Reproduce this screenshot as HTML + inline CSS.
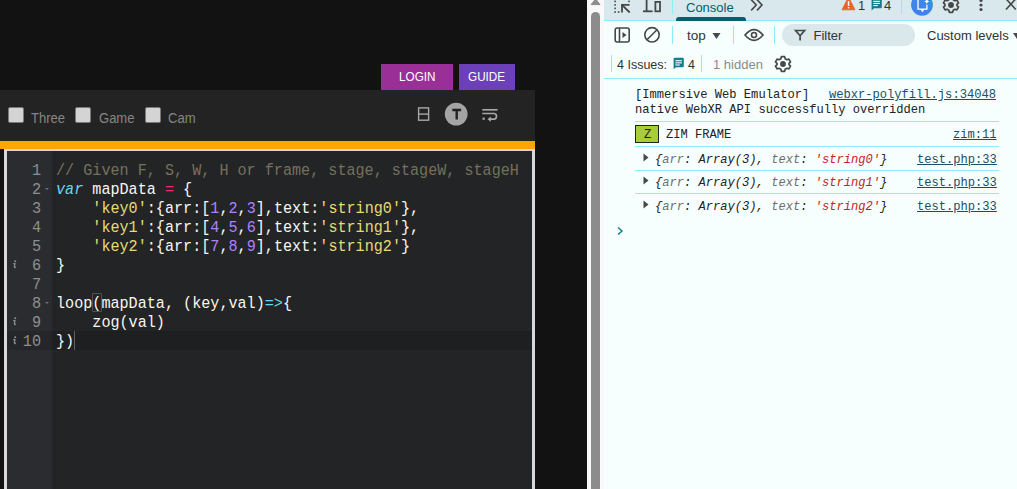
<!DOCTYPE html>
<html><head><meta charset="utf-8">
<style>
*{margin:0;padding:0;box-sizing:border-box}
html,body{width:1017px;height:489px;overflow:hidden;background:#121212;position:relative;font-family:"Liberation Sans",sans-serif}
.abs{position:absolute}
/* left app */
#tb{left:0;top:90px;width:535px;height:51px;background:#232323}
#orange{left:0;top:141px;width:535px;height:8px;background:#ffa600}
.cb{position:absolute;top:107.2px;width:15.5px;height:15.6px;background:#d4d4d4;border:1px solid #7a7a7a;border-radius:2px}
.cbl{position:absolute;top:110px;font-size:14px;color:#868686;line-height:16px;transform:scaleX(0.93);transform-origin:0 0}
.btn{position:absolute;top:64px;height:26px;color:#fff;font-size:13px;line-height:26px;text-align:center}
#editor{left:4px;top:149px;width:531px;height:340px;background:#d8d8d8}
#gutter{left:7px;top:151px;width:45px;height:338px;background:#2b2c2f}
#code{left:52px;top:151px;width:480px;height:338px;background:#232425}
#active{left:52px;top:331px;width:480px;height:19px;background:#1e1f20}
#activeg{left:7px;top:331px;width:45px;height:19px;background:#252629}
.ln{position:absolute;left:6px;margin-top:1px;width:35px;text-align:right;font-family:"Liberation Mono",monospace;font-size:16.3px;line-height:19px;color:#8f908a;transform:scaleX(0.932);transform-origin:100% 0}
.line{position:absolute;left:55.8px;margin-top:1px;white-space:pre;font-family:"Liberation Mono",monospace;font-size:16.3px;line-height:19px;color:#f8f8f2;transform:scaleX(0.929);transform-origin:0 0}
.c{color:#75715e}.k{color:#66d9ef;font-style:italic}.o{color:#f92672}.s{color:#e6db74}.n{color:#ae81ff}.a{color:#66d9ef}
.ii{position:absolute;left:13px;font-size:8px;line-height:10px;color:#9a9a9a;font-style:italic;font-weight:bold;font-family:"Liberation Sans",sans-serif}
.fold{position:absolute;left:45px;width:0;height:0;border-left:2.2px solid transparent;border-right:2.2px solid transparent;border-top:2.5px solid #6f7073}
/* scrollbar */
#sb{left:587px;top:0;width:17px;height:489px;background:#f9f9f9}
#thumb{left:591px;top:12px;width:9px;height:477px;background:#8c8c8c;border-radius:5px 5px 0 0}
/* devtools */
#dt{left:604px;top:0;width:413px;height:489px;background:#f6fefe}
#dtb{left:604px;top:0;width:413px;height:20px;background:#d9e8ec}
.hb{position:absolute;height:1px;background:#8aeefb}
.vs{position:absolute;width:1px;background:#8aeefb}
.ui{position:absolute;font-size:12px;line-height:14px;color:#333}
.mono{position:absolute;margin-top:1px;font-family:"Liberation Mono",monospace;font-size:12.1px;line-height:14px;color:#222;white-space:pre}
.lnk{color:#1a4f66;text-decoration:underline}
.pk{color:#6e6e6e}.st{color:#c5221f}
</style></head><body>
<div class="abs" id="tb"></div>
<div class="abs" id="orange"></div>
<svg class="abs" style="left:410px;top:98px" width="100" height="32">
 <rect x="8.6" y="9.9" width="10" height="12.3" fill="none" stroke="#a8a8a8" stroke-width="1.4"/>
 <path d="M8.6 16.1 H18.6" stroke="#a8a8a8" stroke-width="1.4"/>
 <circle cx="46.2" cy="16.1" r="11.4" fill="#a4a4a4"/>
 <path d="M42.3 12 H51.1 M46.7 12 V21.6" stroke="#222" stroke-width="2.4" fill="none"/>
 <path d="M72.3 11.8 H87.5" stroke="#a8a8a8" stroke-width="1.7"/>
 <path d="M72.3 15.5 H84.5 A3 3 0 0 1 84.5 21.2 H80" stroke="#a8a8a8" stroke-width="1.7" fill="none"/>
 <path d="M77.5 21.2 L80.8 18.6 V23.8 Z" fill="#a8a8a8"/>
 <rect x="72.5" y="19.6" width="2.3" height="2.2" fill="#a8a8a8"/>
</svg>

<div class="cb" style="left:8.3px"></div><div class="cbl" style="left:30.6px">Three</div>
<div class="cb" style="left:75.4px"></div><div class="cbl" style="left:98.7px">Game</div>
<div class="cb" style="left:145.2px"></div><div class="cbl" style="left:167.7px">Cam</div>
<div class="btn" style="left:381px;width:72px;background:#9a2f98"><span style="display:inline-block;transform:scaleX(0.9)">LOGIN</span></div>
<div class="btn" style="left:459px;width:56px;background:#6c40b8"><span style="display:inline-block;transform:scaleX(0.9)">GUIDE</span></div>

<div class="abs" id="editor"></div>
<div class="abs" id="gutter"></div>
<div class="abs" id="code"></div>
<div class="abs" id="activeg"></div>
<div class="abs" id="active"></div>

<div class="ln" style="top:160px">1</div>
<div class="ln" style="top:179px">2</div>
<div class="ln" style="top:198px">3</div>
<div class="ln" style="top:217px">4</div>
<div class="ln" style="top:236px">5</div>
<div class="ln" style="top:255px">6</div>
<div class="ln" style="top:274px">7</div>
<div class="ln" style="top:293px">8</div>
<div class="ln" style="top:312px">9</div>
<div class="ln" style="top:331px">10</div>

<div class="line" style="top:160px"><span class="c">// Given F, S, W, H or frame, stage, stageW, stageH</span></div>
<div class="line" style="top:179px"><span class="k">var</span> mapData <span class="o">=</span> {</div>
<div class="line" style="top:198px">    <span class="s">'key0'</span>:{arr:[<span class="n">1</span>,<span class="n">2</span>,<span class="n">3</span>],text:<span class="s">'string0'</span>},</div>
<div class="line" style="top:217px">    <span class="s">'key1'</span>:{arr:[<span class="n">4</span>,<span class="n">5</span>,<span class="n">6</span>],text:<span class="s">'string1'</span>},</div>
<div class="line" style="top:236px">    <span class="s">'key2'</span>:{arr:[<span class="n">7</span>,<span class="n">8</span>,<span class="n">9</span>],text:<span class="s">'string2'</span>}</div>
<div class="line" style="top:255px">}</div>
<div class="line" style="top:293px">loop(mapData, (key,val)<span class="a">=&gt;</span>{</div>
<div class="line" style="top:312px">    zog(val)</div>
<div class="line" style="top:331px">})</div>

<svg class="abs" style="left:10px;top:255px" width="10" height="19"><circle cx="5.2" cy="6.3" r="1.05" fill="#8c8c8c"/><path d="M3.2 8.7 H4.9 L4.4 11.9 Q4.4 12.5 5.9 12.5" fill="none" stroke="#8c8c8c" stroke-width="1.3"/></svg>
<svg class="abs" style="left:10px;top:312px" width="10" height="19"><circle cx="5.2" cy="6.3" r="1.05" fill="#8c8c8c"/><path d="M3.2 8.7 H4.9 L4.4 11.9 Q4.4 12.5 5.9 12.5" fill="none" stroke="#8c8c8c" stroke-width="1.3"/></svg>
<svg class="abs" style="left:10px;top:331px" width="10" height="19"><circle cx="5.2" cy="6.3" r="1.05" fill="#8c8c8c"/><path d="M3.2 8.7 H4.9 L4.4 11.9 Q4.4 12.5 5.9 12.5" fill="none" stroke="#8c8c8c" stroke-width="1.3"/></svg>
<div class="fold" style="top:187.5px"></div>
<div class="fold" style="top:301.5px"></div>
<div class="abs" style="left:91.5px;top:292.8px;width:10px;height:19.5px;border:1px solid #545247;border-radius:1px"></div>
<div class="abs" style="left:74px;top:331px;width:1px;height:19px;background:#5f6062"></div>
<div class="abs" id="sb"></div>
<div class="abs" id="thumb"></div>

<div class="abs" id="dt"></div>
<div class="abs" id="dtb"></div>
<div class="hb" style="left:604px;top:20px;width:413px"></div>
<div class="hb" style="left:604px;top:78px;width:413px"></div>
<!-- scrollbar arrow -->
<svg class="abs" style="left:590px;top:0" width="12" height="6"><path d="M1.2 4.6 L5.6 -1.2 L10 4.6 Z" fill="#8c8c8c" stroke="#8c8c8c" stroke-width="1" stroke-linejoin="round"/></svg>
<!-- top toolbar icons -->
<svg class="abs" style="left:612px;top:-4px" width="22" height="20" fill="none" stroke="#474747">
 <g fill="#474747" stroke="none"><rect x="2.3" y="4.6" width="1.6" height="1.6"/><rect x="2.3" y="8.1" width="1.6" height="1.6"/><rect x="2.3" y="11.6" width="1.6" height="1.6"/><rect x="2.3" y="15.2" width="1.6" height="1.6"/><rect x="5.8" y="15.2" width="1.6" height="1.6"/><rect x="16.2" y="4.6" width="1.6" height="1.6"/></g>
 <path d="M10 16.5 V8.8 H17.5" stroke-width="1.8"/><path d="M10.5 9.3 L17.7 16.5" stroke-width="1.8"/>
</svg>
<svg class="abs" style="left:640px;top:-4px" width="24" height="20" fill="none" stroke="#474747">
 <path d="M6.6 3 V15.3" stroke-width="1.8"/><path d="M3 15.3 H12.6" stroke-width="1.8"/><rect x="15.4" y="5.9" width="4.6" height="9.4" stroke-width="1.8"/>
</svg>
<div class="vs" style="left:672px;top:0;height:14px"></div>
<div class="ui" style="left:686px;top:1px;font-size:13px;color:#005f6c">Console</div>
<div class="abs" style="left:676px;top:17px;width:70px;height:4px;background:#00626f;border-radius:3px 3px 0 0"></div>
<svg class="abs" style="left:748px;top:-3px" width="18" height="16" fill="none" stroke="#474747" stroke-width="1.6"><path d="M3.2 2.6 L8.2 8 L3.2 13.4"/><path d="M9 2.6 L14 8 L9 13.4"/></svg>
<svg class="abs" style="left:841px;top:-4px" width="15" height="15"><path d="M7.5 1 L14 13.8 H1 Z" fill="#e8632b" stroke="#e8632b" stroke-width="0.8" stroke-linejoin="round"/><rect x="6.8" y="5" width="1.5" height="5" fill="#fff"/><rect x="6.8" y="11" width="1.5" height="1.4" fill="#fff"/></svg>
<div class="ui" style="left:858px;top:-1px;font-size:13px;color:#333">1</div>
<svg class="abs" style="left:870px;top:-3px" width="14" height="15"><path d="M2.6 0.8 H10.8 Q11.8 0.8 11.8 1.8 V10.2 Q11.8 11.2 10.8 11.2 H4 L1.6 13.4 V1.8 Q1.6 0.8 2.6 0.8 Z" fill="#137f8c"/><rect x="3.4" y="3.8" width="6.4" height="1.1" fill="#fff"/><rect x="3.4" y="5.9" width="6.4" height="1.1" fill="#fff"/><rect x="3.4" y="8" width="4.4" height="1.1" fill="#fff"/></svg>
<div class="ui" style="left:884px;top:-1px;font-size:13px;color:#333">4</div>
<div class="vs" style="left:901px;top:0;height:14px"></div>
<svg class="abs" style="left:910px;top:-7px" width="24" height="24"><defs><linearGradient id="bg1" x1="0" y1="1" x2="1" y2="0"><stop offset="0" stop-color="#3f7ff0"/><stop offset="0.55" stop-color="#3f86ea"/><stop offset="1" stop-color="#22a6c4"/></linearGradient></defs><circle cx="12" cy="11.8" r="10.9" fill="url(#bg1)"/><path d="M13.6 6.4 H8 V16.2 H16.9 V11.8" fill="none" stroke="#fff" stroke-width="1.3"/><path d="M10.3 16 H14.6 L12.4 19.2 Z" fill="#fff"/><path d="M16.8 5.8 Q17.2 8 19.4 8.4 Q17.2 8.8 16.8 11 Q16.4 8.8 14.2 8.4 Q16.4 8 16.8 5.8 Z" fill="#fff"/></svg>
<svg class="abs" style="left:941px;top:-5px" width="20" height="20"><g transform="translate(10 10)"><path fill="none" stroke="#474747" stroke-width="1.7" d="M-1.6 -7.3 L1.6 -7.3 L2.2 -5.3 L3.9 -4.3 L5.9 -4.9 L7.5 -2.1 L6 -0.6 L6 0.6 L7.5 2.1 L5.9 4.9 L3.9 4.3 L2.2 5.3 L1.6 7.3 L-1.6 7.3 L-2.2 5.3 L-3.9 4.3 L-5.9 4.9 L-7.5 2.1 L-6 0.6 L-6 -0.6 L-7.5 -2.1 L-5.9 -4.9 L-3.9 -4.3 L-2.2 -5.3 Z" stroke-linejoin="round"/><circle r="2.9" fill="#474747"/></g></svg>
<svg class="abs" style="left:976px;top:-2px" width="10" height="16" fill="#474747"><circle cx="5" cy="2.5" r="1.6"/><circle cx="5" cy="7" r="1.6"/><circle cx="5" cy="11.5" r="1.6"/></svg>
<svg class="abs" style="left:1003px;top:-3px" width="16" height="16" fill="none" stroke="#474747" stroke-width="1.6"><path d="M3 1.8 L12.8 12.5 M12.8 1.8 L3 12.5"/></svg>
<!-- second toolbar -->
<svg class="abs" style="left:612px;top:25px" width="20" height="20" fill="none" stroke="#474747" stroke-width="1.6"><rect x="3.2" y="3" width="14" height="14" rx="2"/><path d="M7.5 3 V17"/><path d="M10.5 7 L14.5 10 L10.5 13 Z" fill="#474747" stroke="none"/></svg>
<svg class="abs" style="left:642px;top:25px" width="20" height="20" fill="none" stroke="#474747" stroke-width="1.6"><circle cx="10" cy="9.8" r="7.2"/><path d="M5 14.8 L15 4.8"/></svg>
<div class="vs" style="left:672px;top:26px;height:18px"></div>
<div class="ui" style="left:687px;top:28.7px;font-size:13.5px;color:#333">top</div>
<svg class="abs" style="left:711px;top:31px" width="12" height="10"><path d="M1.5 2 H9.5 L5.5 8 Z" fill="#474747"/></svg>
<div class="vs" style="left:733px;top:26px;height:18px"></div>
<svg class="abs" style="left:742px;top:25px" width="24" height="20" fill="none" stroke="#474747" stroke-width="1.6"><path d="M3 10 Q12 -0.8 21 10 Q12 20.8 3 10 Z"/><circle cx="12" cy="10" r="2.5"/></svg>
<div class="vs" style="left:774px;top:26px;height:18px"></div>
<div class="abs" style="left:782px;top:24px;width:133px;height:22px;background:#dae8ec;border-radius:11px"></div>
<svg class="abs" style="left:793px;top:28px" width="14" height="14" fill="none" stroke="#474747" stroke-width="1.7"><path d="M2.6 2.5 H11.6 L7.1 7.8 Z M7.1 7.8 V12.4"/></svg>
<div class="ui" style="left:813.5px;top:28.7px;font-size:13px;color:#333">Filter</div>
<div class="ui" style="left:927px;top:28.7px;font-size:13px;color:#333">Custom levels</div>
<svg class="abs" style="left:1012px;top:31px" width="10" height="10"><path d="M1 2 H9 L5 8 Z" fill="#474747"/></svg>
<!-- issues bar -->
<div class="vs" style="left:611px;top:55px;height:17px"></div>
<div class="ui" style="left:617px;top:58px;font-size:12.5px;color:#333">4 Issues:</div>
<svg class="abs" style="left:672px;top:57px" width="14" height="15"><path d="M2.6 0.8 H10.8 Q11.8 0.8 11.8 1.8 V9.2 Q11.8 10.2 10.8 10.2 H4 L1.6 12.2 V1.8 Q1.6 0.8 2.6 0.8 Z" fill="#137f8c"/><rect x="3.4" y="3.2" width="6.4" height="1.1" fill="#fff"/><rect x="3.4" y="5.3" width="6.4" height="1.1" fill="#fff"/><rect x="3.4" y="7.4" width="4.4" height="1.1" fill="#fff"/></svg>
<div class="ui" style="left:688px;top:58px;font-size:12.5px;color:#333">4</div>
<div class="vs" style="left:701px;top:55px;height:17px"></div>
<div class="ui" style="left:713px;top:58px;font-size:13px;color:#8a8a8a">1 hidden</div>
<svg class="abs" style="left:773px;top:54px" width="20" height="20"><g transform="translate(10 10)"><path fill="none" stroke="#474747" stroke-width="1.7" d="M-1.6 -7.3 L1.6 -7.3 L2.2 -5.3 L3.9 -4.3 L5.9 -4.9 L7.5 -2.1 L6 -0.6 L6 0.6 L7.5 2.1 L5.9 4.9 L3.9 4.3 L2.2 5.3 L1.6 7.3 L-1.6 7.3 L-2.2 5.3 L-3.9 4.3 L-5.9 4.9 L-7.5 2.1 L-6 0.6 L-6 -0.6 L-7.5 -2.1 L-5.9 -4.9 L-3.9 -4.3 L-2.2 -5.3 Z" stroke-linejoin="round"/><circle r="2.9" fill="#474747"/></g></svg>
<!-- console messages -->
<div class="mono" style="left:635px;top:87px">[Immersive Web Emulator]</div>
<div class="mono" style="left:829px;top:87px"><span class="lnk">webxr-polyfill.js:34048</span></div>
<div class="mono" style="left:635px;top:102px">native WebXR API successfully overridden</div>
<div class="hb" style="left:635px;top:121px;width:364px"></div>
<div class="abs" style="left:635px;top:125px;width:24px;height:18px;background:#a9cd3a;border:1px solid #222"></div>
<div class="mono" style="left:644px;top:127px">Z</div>
<div class="mono" style="left:666px;top:127px">ZIM FRAME</div>
<div class="mono" style="left:953px;top:127px"><span class="lnk">zim:11</span></div>
<div class="hb" style="left:635px;top:146px;width:364px"></div>
<svg class="abs" style="left:642px;top:153px" width="8" height="10"><path d="M1.5 0.5 L6.5 4.5 L1.5 8.5 Z" fill="#474747"/></svg>
<div class="mono" style="left:655px;top:152px;font-style:italic"><span class="ob">{</span><span class="pk">arr</span>: Array(3), <span class="pk">text</span>: <span class="st">'string0'</span>}</div>
<div class="mono" style="left:917px;top:152px"><span class="lnk">test.php:33</span></div>
<div class="hb" style="left:635px;top:170px;width:364px"></div>
<svg class="abs" style="left:642px;top:176px" width="8" height="10"><path d="M1.5 0.5 L6.5 4.5 L1.5 8.5 Z" fill="#474747"/></svg>
<div class="mono" style="left:655px;top:175px;font-style:italic">{<span class="pk">arr</span>: Array(3), <span class="pk">text</span>: <span class="st">'string1'</span>}</div>
<div class="mono" style="left:917px;top:175px"><span class="lnk">test.php:33</span></div>
<div class="hb" style="left:635px;top:193px;width:364px"></div>
<svg class="abs" style="left:642px;top:200px" width="8" height="10"><path d="M1.5 0.5 L6.5 4.5 L1.5 8.5 Z" fill="#474747"/></svg>
<div class="mono" style="left:655px;top:199px;font-style:italic">{<span class="pk">arr</span>: Array(3), <span class="pk">text</span>: <span class="st">'string2'</span>}</div>
<div class="mono" style="left:917px;top:199px"><span class="lnk">test.php:33</span></div>
<svg class="abs" style="left:615px;top:225px" width="10" height="12" fill="none" stroke="#137f8c" stroke-width="1.5"><path d="M3 2.5 L7 6 L3 9.5"/></svg>
</body></html>
